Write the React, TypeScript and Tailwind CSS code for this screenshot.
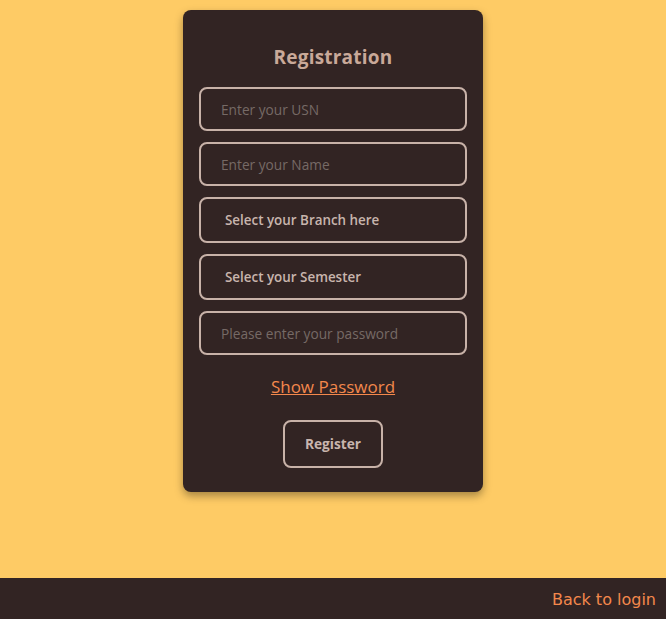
import React from 'react';

const font = { fontFamily: '"Open Sans", "DejaVu Sans", sans-serif' };

export default function App() {
  return (
    <div className="min-h-screen flex flex-col bg-[#fecb65]" style={font}>
      <main className="flex-1 flex justify-center pt-[10px]">
        {/* Registration card */}
        <div className="w-[300px] h-[482px] bg-[#322423] rounded-lg shadow-[0_4px_8px_rgba(0,0,0,0.35)] px-4 pt-[35px] flex flex-col items-center">
          <h1 className="text-[19px] font-bold text-[#c9a999] leading-6 tracking-[0.2px]">Registration</h1>

          <div className="w-full flex flex-col gap-[11px] mt-[18px]">
            <input
              className="w-full h-[44px] rounded-lg border-2 border-[#c8b2a8] bg-transparent px-5 text-[13.7px] text-[#c8b5ad] placeholder:text-[#766a66] outline-none"
              placeholder="Enter your USN"
            />
            <input
              className="w-full h-[44px] rounded-lg border-2 border-[#c8b2a8] bg-transparent px-5 text-[13.7px] text-[#c8b5ad] placeholder:text-[#766a66] outline-none"
              placeholder="Enter your Name"
            />
            <div className="w-full h-[46px] rounded-lg border-2 border-[#c8b2a8] flex items-center px-6 text-[13.4px] font-semibold text-[#c8b5ad]">
              Select your Branch here
            </div>
            <div className="w-full h-[46px] rounded-lg border-2 border-[#c8b2a8] flex items-center px-6 text-[13.4px] font-semibold text-[#c8b5ad]">
              Select your Semester
            </div>
            <input
              type="password"
              className="w-full h-[44px] rounded-lg border-2 border-[#c8b2a8] bg-transparent px-5 text-[13.7px] text-[#c8b5ad] placeholder:text-[#766a66] outline-none"
              placeholder="Please enter your password"
            />
          </div>

          <a href="#" className="mt-[20px] text-[17px] text-[#f4884c] underline leading-6">
            Show Password
          </a>

          <button className="mt-[21px] w-[100px] h-[48px] rounded-lg border-2 border-[#c8b2a8] text-[13.7px] font-bold text-[#c8b5ad]">
            Register
          </button>
        </div>
      </main>

      <footer className="h-[41px] bg-[#322423] flex items-center justify-end pr-[10px] pt-[2px]">
        <a href="#" className="text-[16px] text-[#f4884c]" style={{ fontFamily: '"DejaVu Sans", sans-serif' }}>
          Back to login
        </a>
      </footer>
    </div>
  );
}
